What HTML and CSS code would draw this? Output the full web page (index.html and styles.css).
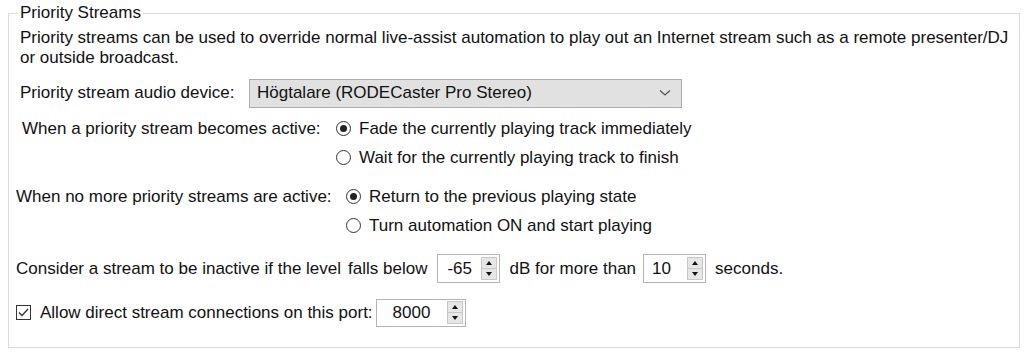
FILE: index.html
```html
<!DOCTYPE html>
<html>
<head>
<meta charset="utf-8">
<link rel="stylesheet" href="styles.css">
</head>
<body>
<fieldset class="group">
  <legend class="group-title">Priority Streams</legend>
  <div class="content">
    <p class="desc">Priority streams can be used to override normal live-assist automation to play out an Internet stream such as a remote presenter/DJ or outside broadcast.</p>

    <div class="row row-device">
      <span class="lbl lbl-device">Priority stream audio device:</span>
      <div class="combo">
        <span class="combo-text">Högtalare (RODECaster Pro Stereo)</span>
        <svg class="chev" width="12" height="8" viewBox="0 0 12 8"><path d="M1 1.5 L6 6 L11 1.5" fill="none" stroke="#555" stroke-width="1.3"/></svg>
      </div>
    </div>

    <div class="rgroup rgroup-1">
      <span class="lbl lbl-g1">When a priority stream becomes active:</span>
      <div class="options">
        <div class="opt"><span class="radio on"></span><span>Fade the currently playing track immediately</span></div>
        <div class="opt"><span class="radio"></span><span>Wait for the currently playing track to finish</span></div>
      </div>
    </div>

    <div class="rgroup rgroup-2">
      <span class="lbl lbl-g2">When no more priority streams are active:</span>
      <div class="options">
        <div class="opt"><span class="radio on"></span><span>Return to the previous playing state</span></div>
        <div class="opt"><span class="radio"></span><span>Turn automation ON and start playing</span></div>
      </div>
    </div>

    <div class="row row-level">
      <span class="lbl lbl-consider">Consider a stream to be inactive if the level</span>
      <span class="lbl lbl-falls">falls below</span>
      <div class="spin spin-db"><span class="spin-val">-65</span><span class="spin-btns"><span class="sb up"></span><span class="sb down"></span></span></div>
      <span class="lbl lbl-db">dB for more than</span>
      <div class="spin spin-sec"><span class="spin-val">10</span><span class="spin-btns"><span class="sb up"></span><span class="sb down"></span></span></div>
      <span class="lbl lbl-sec">seconds.</span>
    </div>

    <div class="row row-port">
      <span class="check"><svg width="11" height="9" viewBox="0 0 11 9"><path d="M1 4.5 L4 7.5 L10 1" fill="none" stroke="#333" stroke-width="1.3"/></svg></span>
      <span class="lbl lbl-port">Allow direct stream connections on this port:</span>
      <div class="spin spin-port"><span class="spin-val">8000</span><span class="spin-btns"><span class="sb up"></span><span class="sb down"></span></span></div>
    </div>
  </div>
</fieldset>
</body>
</html>
```

FILE: styles.css
```css
html, body {
  margin: 0;
  padding: 0;
  background: #ffffff;
}
body {
  font-family: "Liberation Sans", Arial, sans-serif;
  font-size: 17px;
  color: #111111;
  width: 1024px;
  height: 357px;
  overflow: hidden;
}
.group {
  margin: 3px 4px 0 8px;
  padding: 0 0 20px 0;
  border: 1px solid #dcdcdc;
  min-width: 0;
}
.group-title {
  margin-left: 9px;
  padding: 0 2px;
  line-height: 20px;
  height: 20px;
}
.content {
  padding-left: 11px;
}
.desc {
  margin: 5px 0 0 0;
  line-height: 20px;
  width: 990px;
}
.row {
  display: flex;
  align-items: center;
}
.lbl {
  white-space: nowrap;
  line-height: 20px;
}
.row-device {
  margin-top: 10px;
  height: 30px;
}
.lbl-device {
  width: 229px;
}
.combo {
  width: 433px;
  height: 29px;
  box-sizing: border-box;
  border: 1px solid #adadad;
  background: #e1e1e1;
  display: flex;
  align-items: center;
  justify-content: space-between;
  padding: 0 10px 0 7px;
}
.combo-text {
  white-space: nowrap;
}
.rgroup {
  display: flex;
  align-items: flex-start;
}
.rgroup-1 {
  margin-top: 6px;
}
.rgroup-2 {
  margin-top: 10px;
}
.rgroup .lbl {
  height: 29px;
  line-height: 29px;
}
.lbl-g1 {
  margin-left: 2px;
  width: 314px;
}
.lbl-g2 {
  margin-left: -4px;
  width: 330px;
}
.options {
  display: flex;
  flex-direction: column;
}
.opt {
  display: flex;
  align-items: center;
  height: 29px;
  gap: 8px;
  white-space: nowrap;
}
.radio {
  width: 15px;
  height: 15px;
  box-sizing: border-box;
  border: 1px solid #333333;
  border-radius: 50%;
  background: #ffffff;
  display: inline-flex;
  align-items: center;
  justify-content: center;
  flex: none;
}
.radio.on::after {
  content: "";
  width: 7px;
  height: 7px;
  border-radius: 50%;
  background: #222222;
}
.row-level {
  margin-top: 14px;
  height: 29px;
  margin-left: -4px;
}
.lbl-falls {
  margin-left: 7px;
}
.spin {
  height: 29px;
  box-sizing: border-box;
  border: 1px solid #b4b4b4;
  background: #ffffff;
  display: flex;
  align-items: center;
  justify-content: space-between;
  padding-right: 2px;
  flex: none;
}
.spin-val {
  white-space: nowrap;
}
.spin-db {
  width: 63px;
  margin-left: 10px;
  padding-left: 9px;
}
.lbl-db {
  margin-left: 9px;
}
.spin-sec {
  width: 63px;
  margin-left: 7px;
  padding-left: 8px;
}
.lbl-sec {
  margin-left: 9px;
}
.spin-btns {
  display: flex;
  flex-direction: column;
  width: 16px;
  height: 23px;
}
.sb {
  flex: 1;
  background: #e6e6e6;
  border: 1px solid #c8c8c8;
  position: relative;
}
.sb + .sb {
  border-top: none;
}
.sb::after {
  content: "";
  position: absolute;
  left: 50%;
  top: 50%;
  transform: translate(-50%, -50%);
  width: 0;
  height: 0;
  border-left: 3px solid transparent;
  border-right: 3px solid transparent;
}
.sb.up::after {
  border-bottom: 4px solid #111111;
}
.sb.down::after {
  border-top: 4px solid #111111;
}
.row-port {
  margin-top: 15px;
  height: 29px;
  margin-left: -4px;
}
.check {
  width: 15px;
  height: 15px;
  box-sizing: border-box;
  border: 1px solid #333333;
  background: #ffffff;
  display: inline-flex;
  align-items: center;
  justify-content: center;
  flex: none;
}
.lbl-port {
  margin-left: 9px;
}
.spin-port {
  width: 90px;
  margin-left: 3px;
  padding-left: 16px;
  height: 28px;
}
```
